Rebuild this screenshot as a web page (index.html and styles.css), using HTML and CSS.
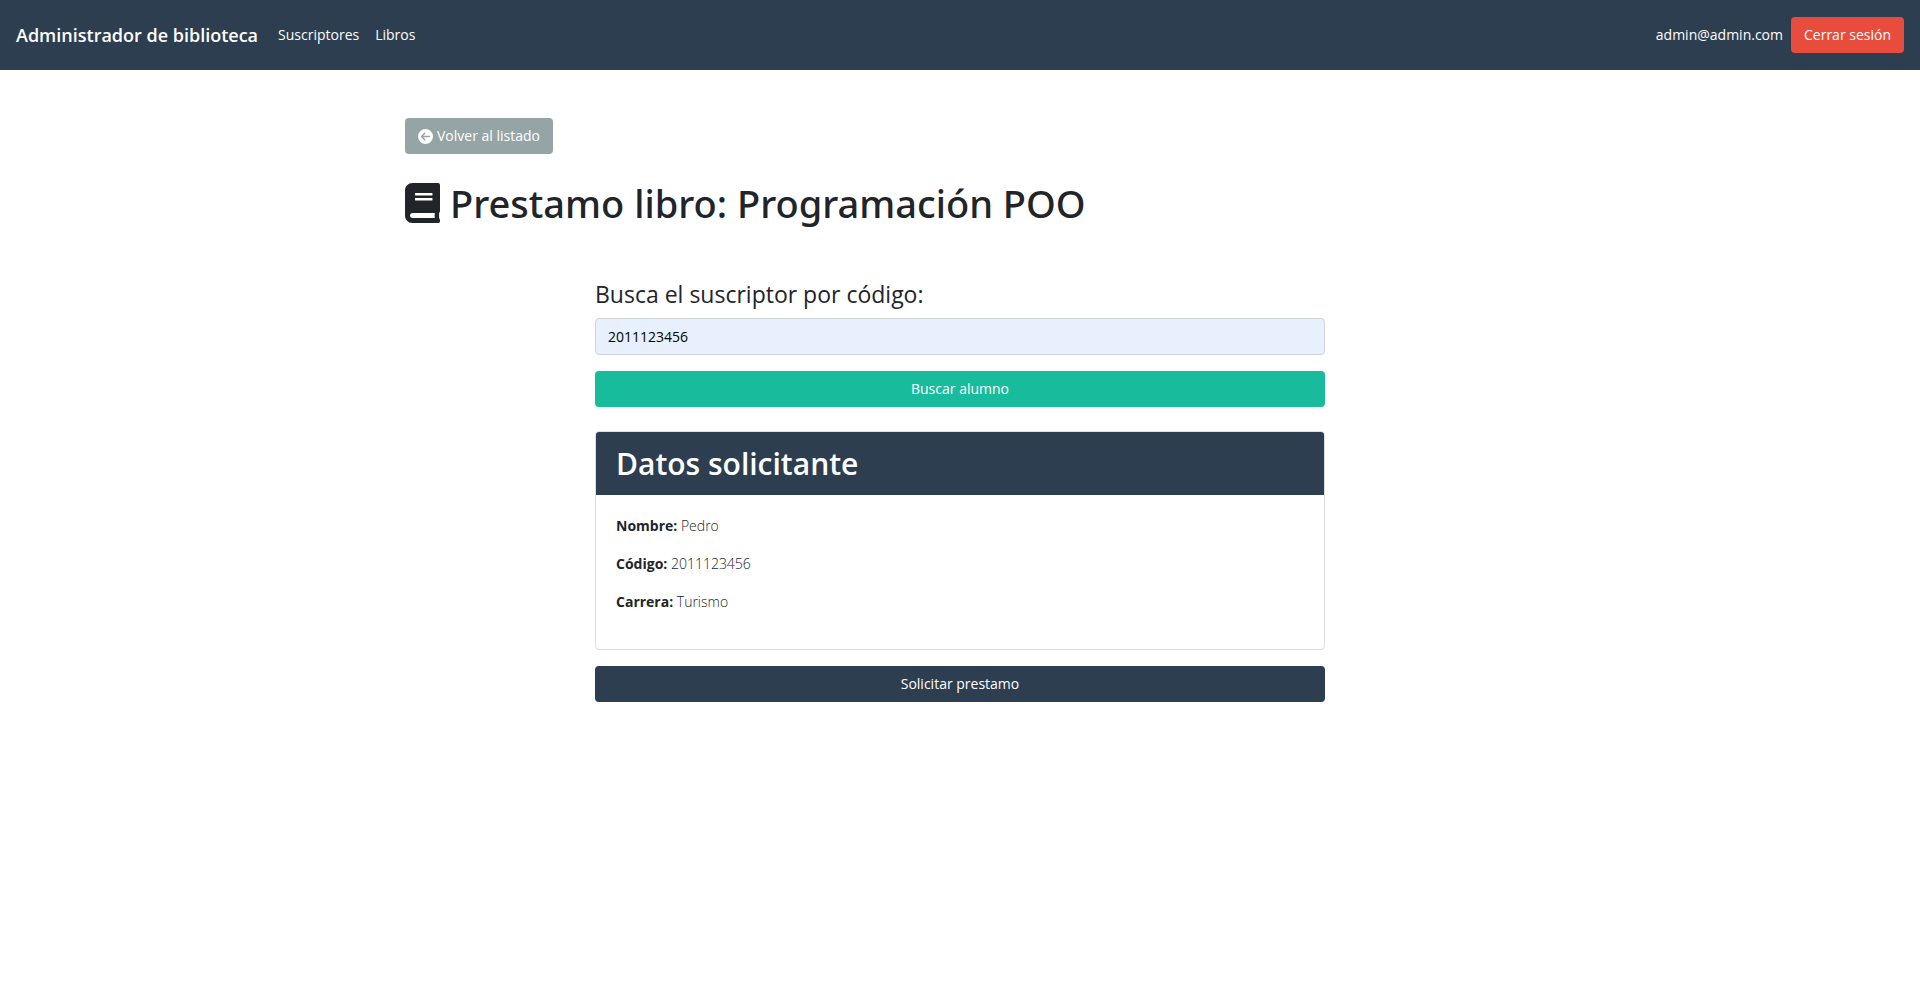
FILE: index.html
```html
<!DOCTYPE html>
<html lang="es">
<head>
  <meta charset="utf-8">
  <meta name="viewport" content="width=device-width, initial-scale=1">
  <title>Administrador de biblioteca</title>
  <link rel="stylesheet" href="styles.css">
</head>
<body>
  <header class="navbar">
    <a class="navbar-brand" href="#">Administrador de biblioteca</a>
    <nav class="navbar-nav">
      <a class="nav-link" href="#">Suscriptores</a>
      <a class="nav-link" href="#">Libros</a>
    </nav>
    <div class="navbar-user">
      <span>admin@admin.com</span>
      <button class="btn btn-danger" type="button">Cerrar sesión</button>
    </div>
  </header>

  <main class="container">
    <a class="btn btn-secondary" href="#">
      <svg class="icon-back" viewBox="0 0 512 512" aria-hidden="true"><path d="M512 256A256 256 0 1 0 0 256a256 256 0 1 0 512 0zM215 127c9.400-9.400 24.600-9.400 33.900 0s9.400 24.600 0 33.900l-71 71L392 232c13.300 0 24 10.700 24 24s-10.700 24-24 24l-214.100 0 71 71c9.400 9.400 9.400 24.600 0 33.900s-24.600 9.400-33.900 0L103 273c-9.400-9.400-9.400-24.600 0-33.900L215 127z"/></svg>
      Volver al listado
    </a>
    <h1 class="page-title">
      <svg class="icon-book" viewBox="0 0 448 512" aria-hidden="true"><path d="M448 360V24c0-13.300-10.700-24-24-24H96C43 0 0 43 0 96v320c0 53 43 96 96 96h328c13.300 0 24-10.700 24-24v-16c0-7.500-3.500-14.300-8.900-18.700-4.200-15.400-4.200-59.300 0-74.700 5.400-4.300 8.900-11.100 8.900-18.600zM128 134c0-3.300 2.700-6 6-6h212c3.300 0 6 2.700 6 6v20c0 3.300-2.700 6-6 6H134c-3.300 0-6-2.700-6-6v-20zm0 64c0-3.300 2.700-6 6-6h212c3.300 0 6 2.700 6 6v20c0 3.300-2.700 6-6 6H134c-3.300 0-6-2.700-6-6v-20zm253.400 250H96c-17.700 0-32-14.300-32-32 0-17.600 14.400-32 32-32h285.400c-1.900 17.100-1.900 46.900 0 64z"/></svg>
      Prestamo libro: Programación POO
    </h1>

    <div class="loan">
      <form class="search-form">
        <label class="search-label" for="codigo">Busca el suscriptor por código:</label>
        <input class="form-control" id="codigo" name="codigo" type="text" value="2011123456">
        <button class="btn btn-success" type="button">Buscar alumno</button>
      </form>

      <section class="card">
        <h2 class="card-header">Datos solicitante</h2>
        <div class="card-body">
          <p><strong>Nombre:</strong> Pedro</p>
          <p><strong>Código:</strong> 2011123456</p>
          <p><strong>Carrera:</strong> Turismo</p>
        </div>
      </section>

      <button class="btn btn-primary" type="button">Solicitar prestamo</button>
    </div>
  </main>
</body>
</html>
```
FILE: styles.css
```css
*,
*::before,
*::after {
  box-sizing: border-box;
}

body {
  margin: 0;
  background: #fff;
  color: #212529;
  font: 400 14px/22px "Open Sans", "Noto Sans", sans-serif;
}

.navbar {
  display: flex;
  align-items: center;
  padding: 17px 16px;
  background: #2c3e50;
  color: #fff;
}

.navbar a {
  color: #fff;
  text-decoration: none;
}

.navbar-brand {
  margin-right: 20px;
  font-size: 18px;
  font-weight: 600;
  line-height: 28px;
}

.navbar-nav {
  display: flex;
  gap: 16px;
}

.navbar-user {
  display: flex;
  align-items: center;
  gap: 8px;
  margin-left: auto;
}

.btn {
  display: inline-flex;
  align-items: center;
  justify-content: center;
  gap: 4px;
  padding: 6px 12px;
  border: 1px solid transparent;
  border-radius: 4px;
  color: #fff;
  font: inherit;
  text-decoration: none;
  cursor: pointer;
}

.btn-danger {
  background: #e74c3c;
}

.btn-secondary {
  background: #95a5a6;
}

.btn-success {
  background: #18bc9c;
}

.btn-primary {
  background: #2c3e50;
}

.icon-back {
  width: 15px;
  height: 15px;
  fill: currentColor;
}

.container {
  max-width: 1140px;
  margin: 48px auto;
  padding: 0 15px;
}

.page-title {
  display: flex;
  align-items: center;
  gap: 10px;
  margin: 24px 0 48px;
  font-family: "Noto Sans", "Open Sans", sans-serif;
  font-size: 38px;
  font-weight: 500;
  line-height: 50px;
}

.icon-book {
  width: 35px;
  height: 40px;
  fill: currentColor;
}

.loan {
  display: flex;
  flex-direction: column;
  gap: 16px;
  max-width: 730px;
  margin: 0 auto;
}

.search-form {
  display: flex;
  flex-direction: column;
  margin-bottom: 8px;
}

.search-label {
  margin-bottom: 6px;
  font-size: 23px;
  line-height: 36px;
}

.form-control {
  width: 100%;
  margin-bottom: 16px;
  padding: 6px 12px;
  border: 1px solid #ced4da;
  border-radius: 4px;
  background: #e8f0fe;
  color: #000;
  font: inherit;
  line-height: 23px;
}

.card {
  border: 1px solid #dfdfdf;
  border-radius: 4px;
  overflow: hidden;
}

.card-header {
  margin: 0;
  padding: 12px 20px;
  background: #2c3e50;
  color: #fff;
  font-size: 30px;
  font-weight: 600;
  line-height: 39px;
}

.card-body {
  padding: 20px;
  font-weight: 300;
}

.card-body p {
  margin: 0 0 16px;
}

.card-body strong {
  font-weight: 700;
}
```
